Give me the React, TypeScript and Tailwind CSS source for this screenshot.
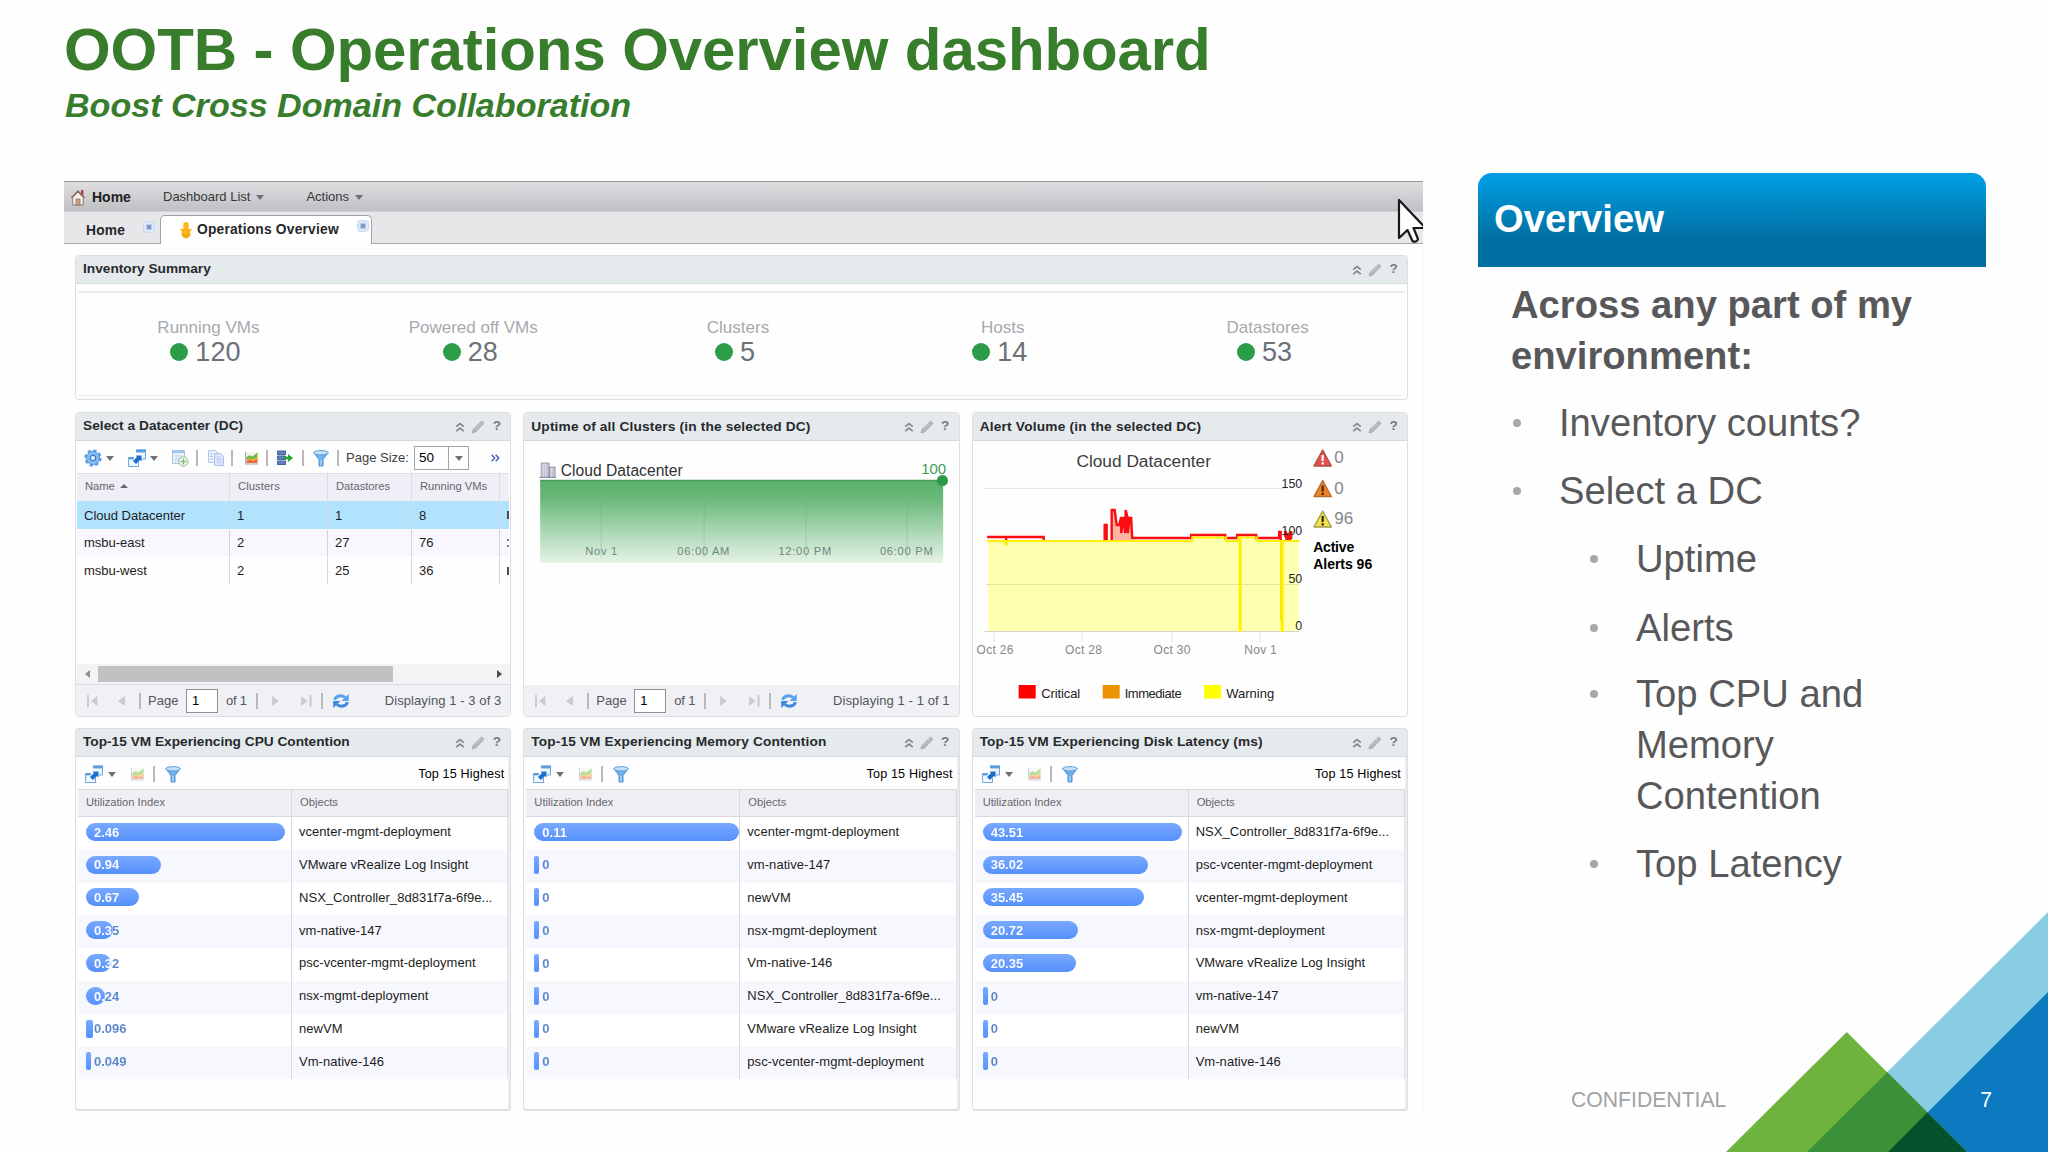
import type { ReactNode } from "react";

type Metric = { value: string; width: number; name: string };

const inventory = [
  { label: "Running VMs", value: 120 },
  { label: "Powered off VMs", value: 28 },
  { label: "Clusters", value: 5 },
  { label: "Hosts", value: 14 },
  { label: "Datastores", value: 53 },
];

const datacenters = [
  { name: "Cloud Datacenter", clusters: 1, datastores: 1, vms: 8 },
  { name: "msbu-east", clusters: 2, datastores: 27, vms: 76 },
  { name: "msbu-west", clusters: 2, datastores: 25, vms: 36 },
];

const cpu: Metric[] = [
  { value: "2.46", width: 199, name: "vcenter-mgmt-deployment" },
  { value: "0.94", width: 75, name: "VMware vRealize Log Insight" },
  { value: "0.67", width: 53, name: "NSX_Controller_8d831f7a-6f9e..." },
  { value: "0.35", width: 27, name: "vm-native-147" },
  { value: "0.32", width: 25, name: "psc-vcenter-mgmt-deployment" },
  { value: "0.24", width: 19, name: "nsx-mgmt-deployment" },
  { value: "0.096", width: 7, name: "newVM" },
  { value: "0.049", width: 5, name: "Vm-native-146" },
];

const memory: Metric[] = [
  { value: "0.11", width: 206, name: "vcenter-mgmt-deployment" },
  { value: "0", width: 5, name: "vm-native-147" },
  { value: "0", width: 5, name: "newVM" },
  { value: "0", width: 5, name: "nsx-mgmt-deployment" },
  { value: "0", width: 5, name: "Vm-native-146" },
  { value: "0", width: 5, name: "NSX_Controller_8d831f7a-6f9e..." },
  { value: "0", width: 5, name: "VMware vRealize Log Insight" },
  { value: "0", width: 5, name: "psc-vcenter-mgmt-deployment" },
];

const disk: Metric[] = [
  { value: "43.51", width: 199, name: "NSX_Controller_8d831f7a-6f9e..." },
  { value: "36.02", width: 165, name: "psc-vcenter-mgmt-deployment" },
  { value: "35.45", width: 161, name: "vcenter-mgmt-deployment" },
  { value: "20.72", width: 95, name: "nsx-mgmt-deployment" },
  { value: "20.35", width: 93, name: "VMware vRealize Log Insight" },
  { value: "0", width: 5, name: "vm-native-147" },
  { value: "0", width: 5, name: "newVM" },
  { value: "0", width: 5, name: "Vm-native-146" },
];

function Caret({ className = "" }: { className?: string }) {
  return (
    <svg viewBox="0 0 8 5" className={`h-[5px] w-2 shrink-0 ${className}`}>
      <path d="M0 0h8L4 5z" fill="#6f6f74" />
    </svg>
  );
}

function Sep({ className = "" }: { className?: string }) {
  return <div className={`h-4 w-[2px] shrink-0 bg-[#b9b9bd] ${className}`} />;
}

function HomeIcon() {
  return (
    <svg viewBox="0 0 14 17" className="ml-[7px] h-[17px] w-[14px] shrink-0">
      <path d="M10 1h2.4v5H10z" fill="#a9473f" />
      <path d="M1.8 8.5 7 3l5.2 5.500V16H1.800z" fill="#f6f1ec" stroke="#8d7a6e" />
      <path d="M.4 9 7 2l6.600 7" fill="none" stroke="#8a6a5c" strokeWidth="1.500" />
      <path d="M5 10h4v6H5z" fill="#c9a58c" stroke="#85685a" strokeWidth=".8" />
    </svg>
  );
}

function TabClose({ className = "" }: { className?: string }) {
  return (
    <svg viewBox="0 0 12 12" className={`h-3 w-3 ${className}`}>
      <rect x=".5" y=".5" width="11" height="11" rx="3" fill="#dfe8f8" stroke="#c8d6f0" />
      <path d="M3.500 3.500h5v5h-5z" fill="#8ea6d6" />
      <path d="m4 4 4 4M8 4 4 8" stroke="#6c87c2" strokeWidth=".8" />
    </svg>
  );
}

function GearIcon({ className = "" }: { className?: string }) {
  return (
    <svg viewBox="0 0 18 18" className={`h-[18px] w-[18px] shrink-0 ${className}`}>
      <circle cx="9" cy="9" r="7.500" fill="none" stroke="#5b9be0" strokeWidth="2.200" strokeDasharray="3.460 2.430" />
      <circle cx="9" cy="9" r="6.500" fill="#86bbf2" stroke="#5296de" />
      <circle cx="9" cy="9" r="2.700" fill="#eef6ff" stroke="#3877c0" strokeWidth="1.200" />
    </svg>
  );
}

function PopoutIcon({ className = "" }: { className?: string }) {
  return (
    <svg viewBox="0 0 18 18" className={`h-[18px] w-[18px] shrink-0 ${className}`}>
      <path d="M8.500 1h9v9h-4" fill="#eaf4fe" stroke="#6aa5dc" />
      <path d="M8 .6h9.900v2.800H8z" fill="#5c9fdf" />
      <path d="M6 8.500H.6v9h9.900V13" fill="#f4f9ff" stroke="#6aa5dc" />
      <path d="M.6 8h5v2.400h-5z" fill="#5c9fdf" />
      <path d="m5 12 4-4-1.500-1.500h6v6L12 11l-4 4z" fill="#1b6fd0" />
    </svg>
  );
}

function ChartIcon({ className = "" }: { className?: string }) {
  return (
    <svg viewBox="0 0 14 14" className={`h-[14px] w-[13px] shrink-0 ${className}`}>
      <path d="M1 .5h12.500v12.500H1z" fill="#f3f3e4" />
      <path d="M1.500 9.500V6L5 4l3 1.500L13.500 1v6L9 9 5.500 8z" fill="#6cb944" />
      <path d="M1.500 10V8.500l4-1L9 8.500l4.500-3v3L9 11z" fill="#f3b73c" />
      <path d="M1.500 12.500V10l4-1.500L9 10.500l4.500-3v5z" fill="#ee6c3a" />
      <path d="M.6 0v13.400H14" fill="none" stroke="#9aa9bd" strokeWidth="1.100" />
    </svg>
  );
}

function FunnelIcon({ className = "" }: { className?: string }) {
  return (
    <svg viewBox="0 0 16 17" className={`h-[17px] w-4 shrink-0 ${className}`}>
      <path d="M.8 2.500 6 9.500V16h4V9.500l5.200-7z" fill="#72b1ea" stroke="#4a90d6" />
      <ellipse cx="8" cy="2.800" rx="7.300" ry="2.200" fill="#c5e0f8" stroke="#5b9edc" />
      <path d="M8 10v5.500" stroke="#b8dafa" strokeWidth="1.200" />
    </svg>
  );
}

function RefreshIcon({ className = "" }: { className?: string }) {
  return (
    <svg viewBox="0 0 18 16" className={`h-4 w-[18px] shrink-0 ${className}`}>
      <path d="M2.500 6.800C4 2.500 10 1.500 13.300 4.800" fill="none" stroke="#5ba3ee" strokeWidth="3" />
      <path d="M16.800 1v7H9.500z" fill="#5ba3ee" />
      <path d="M15.500 9.200C14 13.500 8 14.500 4.700 11.200" fill="none" stroke="#3a88e2" strokeWidth="3" />
      <path d="M1.200 15V8h7.300z" fill="#3a88e2" />
    </svg>
  );
}

function PanelTools() {
  return (
    <div className="ml-auto flex items-center">
      <svg viewBox="0 0 10 10" className="h-[10px] w-[10px]">
        <path d="m1.200 4.700 3.800-3 3.800 3M1.200 9.200l3.800-3 3.800 3" fill="none" stroke="#83858a" strokeWidth="1.700" />
      </svg>
      <svg viewBox="0 0 14 14" className="ml-[6px] h-[14px] w-[14px]">
        <path d="m1 13 1-3.600L10.700 1 13 3.300 4.600 12z" fill="#b4b5b8" stroke="#a3a5a9" strokeWidth=".7" />
        <path d="m3.500 9.500 7-6.700" stroke="#d3d4d7" strokeWidth=".8" />
      </svg>
      <span className="ml-[7px] mr-[9px] w-[9px] text-center text-[13.500px] font-bold text-[#77797e]">?</span>
    </div>
  );
}

type PanelProps = { title: string; titleClass?: string; className?: string; children: ReactNode };

function Panel({ title, titleClass = "", className = "", children }: PanelProps) {
  return (
    <section className={`flex min-w-0 flex-col overflow-hidden rounded-[4px] border border-[#dcdee2] ${className}`}>
      <div className="flex h-[28px] shrink-0 items-center border-b border-[#d6dade] bg-[#e5eaed] pl-[7px]">
        <h3 className={`text-[13.700px] font-bold whitespace-nowrap text-[#27292c] ${titleClass}`}>{title}</h3>
        <PanelTools />
      </div>
      {children}
    </section>
  );
}

function Pager({ total }: { total: number }) {
  return (
    <div className="flex h-[31px] shrink-0 items-center bg-[#eff1f4] text-[13px] whitespace-nowrap text-[#55565a]">
      <svg viewBox="0 0 12 12" className="ml-[11px] h-3 w-3 shrink-0">
        <path d="M0 0h2v12H0zM10.500 1v10L4 6z" fill="#c9cbcf" />
      </svg>
      <svg viewBox="0 0 8 12" className="ml-[19px] h-3 w-2 shrink-0">
        <path d="M7 1v10L0 6z" fill="#c9cbcf" />
      </svg>
      <Sep className="ml-[13px]" />
      <span className="ml-[7px] w-[38px] shrink-0">Page</span>
      <span className="flex h-[24px] w-[32px] shrink-0 items-center border border-[#8f9094] bg-white pt-px pl-[5px] text-black">1</span>
      <span className="ml-[8px] w-[30px] shrink-0 tracking-[-0.2px]">of 1</span>
      <Sep />
      <svg viewBox="0 0 8 12" className="ml-[14px] h-3 w-2 shrink-0">
        <path d="M0 1v10l7-5z" fill="#c9cbcf" />
      </svg>
      <svg viewBox="0 0 12 12" className="ml-[20px] h-3 w-3 shrink-0">
        <path d="M9.500 0h2v12h-2zM1 1v10l6.500-5z" fill="#c9cbcf" />
      </svg>
      <Sep className="ml-[9px]" />
      <RefreshIcon className="ml-[9px]" />
      <span className="mr-[9px] ml-auto tracking-[0.080px]">
        Displaying 1 - {total} of {total}
      </span>
    </div>
  );
}

function DatacenterPanel() {
  return (
    <Panel title="Select a Datacenter (DC)" titleClass="tracking-[0.050px]">
      <div className="flex h-[32px] shrink-0 items-center pt-[2px]">
        <GearIcon className="ml-[8px]" />
        <Caret className="ml-[4px]" />
        <PopoutIcon className="ml-[14px]" />
        <Caret className="ml-[4px]" />
        <svg viewBox="0 0 17 17" className="ml-[14px] h-[17px] w-[17px] shrink-0">
          <path d="M.5.5h12v13H.500z" fill="#e8f0fa" stroke="#a9c3e2" />
          <path d="M.5.500h12v2.500H.500z" fill="#a5c6ec" />
          <path d="M3 6h7M3 8.500h5M3 11h4" stroke="#bccfe6" />
          <circle cx="11.500" cy="11.500" r="4.700" fill="#e2f1de" stroke="#9ebf9a" />
          <path d="M11.500 8.800v5.400M8.800 11.500h5.400" stroke="#7fae7c" />
        </svg>
        <Sep className="ml-[7px]" />
        <svg viewBox="0 0 16 16" className="ml-[10px] h-4 w-4 shrink-0">
          <path d="M.5.5h7l2 2v10h-9z" fill="#edf2fd" stroke="#b3c6f0" />
          <path d="M6.500 3.500h6l3 3v9h-9z" fill="#dfe8fb" stroke="#a9bfee" />
          <path d="M2 4h3M2 6.500h3M2 9h3M8.500 7h4M8.500 9.500h5M8.500 12h5" stroke="#b3c6f0" />
        </svg>
        <Sep className="ml-[7px]" />
        <ChartIcon className="ml-[12px]" />
        <Sep className="ml-[8px]" />
        <svg viewBox="0 0 16 16" className="ml-[9px] h-4 w-4 shrink-0">
          <path d="M.5 1h8v3.500h-8zM.5 6h8v3.500h-8zM.5 11h8v3.500h-8z" fill="#5f83c4" stroke="#41609f" />
          <path d="M6 6.700h5V4l5 4-5 4V9.300H6z" fill="#23a52f" />
        </svg>
        <Sep className="ml-[9px]" />
        <FunnelIcon className="ml-[9px]" />
        <Sep className="ml-[8px]" />
        <span className="ml-[7px] w-[68px] shrink-0 text-[13px] whitespace-nowrap text-[#3c3d40]">Page Size:</span>
        <div className="flex h-[24px] w-[55px] shrink-0 items-stretch border border-[#a3a4a8] text-[13.500px] text-black">
          <span className="flex flex-1 items-center pl-1">50</span>
          <span className="flex w-[20px] items-center justify-center border-l border-[#a3a4a8]">
            <Caret />
          </span>
        </div>
        <svg viewBox="0 0 9 8" className="mr-[10px] ml-auto h-2 w-[9px] shrink-0">
          <path d="m.7.700 3 3.300-3 3.300M4.700.700l3 3.300-3 3.300" fill="none" stroke="#4a62b8" strokeWidth="1.500" />
        </svg>
      </div>
      <div className="mx-px grid h-[28px] shrink-0 grid-cols-[153px_98px_84px_88px_1fr] items-stretch border-t border-[#dfdde6] bg-[#f0eef6] text-[11.200px] whitespace-nowrap text-[#66676b]">
        <span className="flex items-center gap-[5px] border-r border-[#dddbe4] pb-[3px] pl-[8px]">
          Name
          <svg viewBox="0 0 8 4" className="h-1 w-2">
            <path d="M0 4h8L4 0z" fill="#66676b" />
          </svg>
        </span>
        <span className="flex items-center border-r border-[#dddbe4] pb-[3px] pl-[8px] tracking-[0.1px]">Clusters</span>
        <span className="flex items-center border-r border-[#dddbe4] pb-[3px] pl-[8px]">Datastores</span>
        <span className="flex items-center border-r border-[#dddbe4] pb-[3px] pl-[8px]">Running VMs</span>
      </div>
      {datacenters.map((dc, i) => (
        <div
          key={dc.name}
          className={`mx-px grid h-[27.800px] shrink-0 grid-cols-[153px_98px_84px_88px_1fr] pt-px text-[13px] whitespace-nowrap text-[#1c1d20] ${
            i === 0 ? "bg-[#b1e2fe]" : i === 1 ? "bg-[#f8f7fe]" : ""
          }`}
        >
          <span className="flex items-center border-r border-[#d3d5dc] pl-[7px]">{dc.name}</span>
          <span className="flex items-center border-r border-[#d3d5dc] pl-[7px]">{dc.clusters}</span>
          <span className="flex items-center border-r border-[#d3d5dc] pl-[7px]">{dc.datastores}</span>
          <span className="flex items-center border-r border-[#d3d5dc] pl-[7px]">{dc.vms}</span>
          <span className="flex items-center justify-end">
            {i === 1 ? (
              <span className="flex flex-col gap-1">
                <i className="h-[2px] w-[2px] bg-[#77787c]" />
                <i className="h-[2px] w-[2px] bg-[#77787c]" />
              </span>
            ) : (
              <i className="h-2 w-[2px] bg-[#4b4c50]" />
            )}
          </span>
        </div>
      ))}
      <div className="mt-auto flex h-[21px] shrink-0 items-center border-b border-[#dcdce0] bg-[#f3f2f4]">
        <svg viewBox="0 0 5 8" className="ml-[9px] h-2 w-[5px]">
          <path d="M5 0v8L0 4z" fill="#8c8d91" />
        </svg>
        <div className="ml-[8px] h-[16px] w-[295px] bg-[#c1c0c3]" />
        <svg viewBox="0 0 5 8" className="mr-[8px] ml-auto h-2 w-[5px]">
          <path d="M0 0v8l5-4z" fill="#4d4e52" />
        </svg>
      </div>
      <Pager total={3} />
    </Panel>
  );
}

function UptimePanel() {
  return (
    <Panel title="Uptime of all Clusters (in the selected DC)" titleClass="pt-px tracking-[0.160px]">
      <svg viewBox="524 441 434 244" className="min-h-0 w-full flex-1">
        <defs>
          <linearGradient id="uptime" x1="0" y1="0" x2="0" y2="1">
            <stop offset="0" stopColor="#58b16a" />
            <stop offset=".2" stopColor="#68b878" />
            <stop offset="1" stopColor="#e6f3e8" />
          </linearGradient>
        </defs>
        <path d="M541 463h8v14h-8zM549 467h6v10h-6z" fill="#c3c2d2" stroke="#8f8fa3" strokeWidth=".8" />
        <path d="M543 464v13M545.500 464v13M551.500 468v9" stroke="#e6e6ee" strokeWidth=".8" />
        <path d="M539 477.500h17" stroke="#8f8fa3" />
        <text x="560.500" y="476" fontSize="15.600" fill="#2f3033" textLength="122">Cloud Datacenter</text>
        <text x="946" y="473.500" fontSize="15" textAnchor="end" fill="#3f9f53">100</text>
        <path d="M540 480.500h403V563H540z" fill="url(#uptime)" />
        <path d="M540 480.500h403" stroke="#4c9b5c" strokeWidth="1.500" />
        <path d="M601 500v58M704 500v58M806 500v58M907 500v58" stroke="#6f9f7b" strokeOpacity=".3" />
        <circle cx="942.300" cy="480.500" r="5.500" fill="#2a9a45" />
        <g fontSize="11.200" fill="#71877a" textAnchor="middle" letterSpacing=".7">
          <text x="601.500" y="555">Nov 1</text>
          <text x="703.500" y="555">06:00 AM</text>
          <text x="805" y="555">12:00 PM</text>
          <text x="906.500" y="555">06:00 PM</text>
        </g>
      </svg>
      <Pager total={1} />
    </Panel>
  );
}

function Warn({ y, fill, stroke, mark }: { y: number; fill: string; stroke: string; mark: string }) {
  return (
    <g>
      <path d={`M1322.500 ${y} l8.700 16 h-17.400z`} fill={fill} stroke={stroke} strokeWidth="1.400" strokeLinejoin="round" />
      <path d={`M1322.500 ${y + 5} v6`} stroke={mark} strokeWidth="2.200" />
      <path d={`M1322.500 ${y + 12.300} v2.200`} stroke={mark} strokeWidth="2.200" />
    </g>
  );
}

function AlertPanel() {
  return (
    <Panel title="Alert Volume (in the selected DC)" titleClass="pt-px tracking-[0.2px]">
      <svg viewBox="973 441 434 275" className="min-h-0 w-full flex-1">
        <text x="1143.500" y="467" fontSize="17.300" textAnchor="middle" fill="#3c3d40">Cloud Datacenter</text>
        <path d="M984 488.500h302" stroke="#e4e9ee" />
        <path d="M988 541h310.500v91H988z" fill="#ffffb0" />
        <path d="M1192 541v-4h34v4M1238 541v-4h19v4" fill="#ffffb0" />
        <path d="M986 584.500h313" stroke="#e4e69f" />
        <path d="M984 631.500h315" stroke="#d3d6c6" />
        <path d="M994 632v10M1082 632v10M1172 632v10M1260 632v10" stroke="#dfe3ea" />
        <path d="M1111.500 540v-29h3l2 13 3 1 2-8 3 0 1-7 2 7 4 0v23z" fill="#fcb4a4" />
        <path
          d="M987 537h56.500v3M1006 537v4M1104.500 540v-15h2v15M1111.500 540v-30h3l2 15h2.500l2-8v16l2-16 2 16 .500-23 2 8v15l2-15h1.500l1 20h59v-3h34v3h12v-3h19v3h23v-6l1.500 0v8M1285 537v-6l3 8v-6l3 6v-8"
          fill="none"
          stroke="#fb0d12"
          strokeWidth="2.400"
        />
        <path d="M1285 533h6v7h-6z" fill="#fb0d12" />
        <path
          d="M987 541h18.500v3.500h1V541H1192v-3.500h34v3.500h12v-3.500h19v3.500h42.500"
          fill="none"
          stroke="#fff000"
          strokeWidth="2"
        />
        <path d="M1240 539v93M1282 541v91" stroke="#fff000" strokeWidth="3" />
        <path d="M1280.500 541v80" stroke="#ffe000" />
        <g fontSize="12.400" fill="#222326" textAnchor="end">
          <text x="1302" y="487.500">150</text>
          <text x="1302" y="535">100</text>
          <text x="1302" y="582.500">50</text>
          <text x="1302" y="630">0</text>
        </g>
        <g fontSize="12" fill="#86878b" textAnchor="middle" letterSpacing=".3">
          <text x="995" y="654">Oct 26</text>
          <text x="1083.500" y="654">Oct 28</text>
          <text x="1172" y="654">Oct 30</text>
          <text x="1260.500" y="654">Nov 1</text>
        </g>
        <path d="M1018.500 685h17v13.500h-17z" fill="#fe0000" />
        <path d="M1102.500 685h17v13.500h-17z" fill="#e99400" />
        <path d="M1204 685h17v13.500h-17z" fill="#ffff00" />
        <g fontSize="13" fill="#1f2023">
          <text x="1041" y="697.500" textLength="39">Critical</text>
          <text x="1124.500" y="697.500" textLength="57">Immediate</text>
          <text x="1226" y="697.500" textLength="48">Warning</text>
        </g>
        <Warn y={450} fill="#e2504e" stroke="#b8484a" mark="#ffffff" />
        <Warn y={480.500} fill="#ef8226" stroke="#b5702f" mark="#3c2a12" />
        <Warn y={511} fill="#f3e04a" stroke="#a59d50" mark="#2b2a1c" />
        <g fontSize="17" fill="#85868a">
          <text x="1334" y="463">0</text>
          <text x="1334" y="493.500">0</text>
          <text x="1334" y="524">96</text>
        </g>
        <g fontSize="14" fontWeight="bold" fill="#000000">
          <text x="1313" y="552" textLength="41">Active</text>
          <text x="1313" y="569" textLength="59">Alerts 96</text>
        </g>
      </svg>
    </Panel>
  );
}

function MetricBar({ value, width }: { value: string; width: number }) {
  // label starts 8px into the bar and turns blue where the bar ends
  const edge = Math.max(width - 8, 0);
  return (
    <div
      className={`flex h-[18px] items-center bg-linear-to-b from-[#79a9ff] to-[#5590fb] ${
        width > 10 ? "rounded-full" : "rounded-[2px]"
      }`}
      style={{ width }}
    >
      <span
        className="ml-[8px] bg-clip-text pt-px text-[13px] font-bold text-transparent"
        style={{ backgroundImage: `linear-gradient(to right, #ffffff ${edge}px, #5c86cb ${edge}px)` }}
      >
        {value}
      </span>
    </div>
  );
}

function TopPanel({ title, titleClass, rows }: { title: string; titleClass?: string; rows: Metric[] }) {
  return (
    <Panel title={title} titleClass={titleClass} className="border-b-2 shadow-[inset_-2px_0_0_#ececef]">
      <div className="flex h-[32px] shrink-0 items-center pt-[2px]">
        <PopoutIcon className="ml-[9px]" />
        <Caret className="ml-[5px]" />
        <ChartIcon className="ml-[15px] opacity-50" />
        <Sep className="ml-[9px]" />
        <FunnelIcon className="ml-[10px]" />
        <span className="mr-[6px] ml-auto text-[12.600px] tracking-[0.150px] text-black">Top 15 Highest</span>
      </div>
      <div className="mx-[2px] grid h-[28px] shrink-0 grid-cols-[214px_1fr] border-t border-b border-[#d9d8df] bg-[#efeef5] text-[11.200px] text-[#66676b]">
        <span className="flex items-center border-r border-[#d9d8df] pb-px pl-[8px]">Utilization Index</span>
        <span className="flex items-center border-r border-[#d9d8df] pb-px pl-[8px]">Objects</span>
      </div>
      {rows.map((row, i) => (
        <div
          key={row.name}
          className={`mx-[2px] grid h-[32.800px] shrink-0 grid-cols-[214px_1fr] ${i % 2 ? "bg-[#f7f7fe]" : "bg-white"}`}
        >
          <div className="flex items-center border-r border-[#d9d9e2] pb-[3px] pl-[8px]">
            <MetricBar value={row.value} width={row.width} />
          </div>
          <div className="flex items-center border-r border-[#e3e3ea] pb-[3px] pl-[7px] text-[13px] tracking-[0.040px] whitespace-nowrap text-[#1c1d20]">
            {row.name}
          </div>
        </div>
      ))}
    </Panel>
  );
}

function Dashboard() {
  return (
    <div className="relative flex h-[931px] w-[1359px] flex-col overflow-hidden">
      <div className="flex h-[30px] shrink-0 items-center border-t border-[#98979a] bg-linear-to-b from-[#dfdee1] to-[#c0bfc3] pt-px text-[13px] text-[#37383b]">
        <HomeIcon />
        <span className="ml-[7px] w-[71px] text-[14px] font-bold text-[#1d1e20]">Home</span>
        <span>Dashboard List</span>
        <Caret className="ml-[6px]" />
        <span className="ml-[42px]">Actions</span>
        <Caret className="ml-[6px]" />
      </div>
      <div className="flex h-[33px] shrink-0 items-end border-t border-[#cfced2] bg-[#e7e7e9] text-[13.800px] font-bold text-[#27282b]">
        <div className="flex h-full w-[96px] border-b border-[#a9a8ac]">
          <span className="mt-[9px] ml-[22px] w-[57px] leading-[20px] tracking-[0.2px]">Home</span>
          <TabClose className="mt-[9px]" />
        </div>
        <div className="flex h-[29px] w-[212px] rounded-t-[5px] border border-b-0 border-[#a1a0a5] bg-white">
          <svg viewBox="0 0 12 17" className="mt-[6px] ml-[19px] h-[17px] w-3">
            <path d="M3.300 1.800C3.300-.3 8.700-.3 8.700 1.800V7H12l-2 3c2 3-1 6.500-4 6.500S0 13 2 10L0 7h3.300z" fill="#fbb41c" />
            <path d="M3 12.500c2 2 4 2 6 0" fill="none" stroke="#e4960a" />
          </svg>
          <span className="mt-[4px] ml-[5px] w-[160px] leading-[20px] tracking-[0.2px] whitespace-nowrap">Operations Overview</span>
          <TabClose className="mt-[4px]" />
        </div>
        <div className="h-full flex-1 border-b border-[#a9a8ac]" />
      </div>
      <div className="flex flex-1 flex-col border-r border-[#f3f3f6] pt-[11px] pr-[14px] pl-[11px]">
        <Panel title="Inventory Summary" className="h-[145px]">
          <div className="mx-[2px] mt-[7px] mb-[3px] grid flex-1 grid-cols-[repeat(5,264.800px)] border-t-2 border-b border-[#e9e9ee]">
            {inventory.map((item) => (
              <div key={item.label} className="flex flex-col items-center pt-[24px] pr-[4px]">
                <span className="text-[17px] leading-[22px] text-[#a7a9af]">{item.label}</span>
                <span className="mr-[6px] flex items-center gap-[7px] text-[27px] leading-[26px] text-[#6c7078]">
                  <i className="h-[18px] w-[18px] rounded-full bg-[#2b9c48]" />
                  {item.value}
                </span>
              </div>
            ))}
          </div>
        </Panel>
        <div className="mt-[12px] grid h-[305px] grid-cols-3 gap-3">
          <DatacenterPanel />
          <UptimePanel />
          <AlertPanel />
        </div>
        <div className="mt-[11px] grid h-[383px] grid-cols-3 gap-3">
          <TopPanel title="Top-15 VM Experiencing CPU Contention" rows={cpu} />
          <TopPanel title="Top-15 VM Experiencing Memory Contention" titleClass="tracking-[0.120px]" rows={memory} />
          <TopPanel title="Top-15 VM Experiencing Disk Latency (ms)" titleClass="tracking-[0.1px]" rows={disk} />
        </div>
      </div>
      <svg viewBox="0 0 30 46" className="absolute top-[17px] left-[1333px] h-[46px] w-[30px]">
        <path
          d="M2 2v38l8.500-8 5 11c2 1.500 5 .500 5.500-2l-4.500-11h12z"
          fill="#ffffff"
          stroke="#17171a"
          strokeWidth="2.200"
          strokeLinejoin="round"
        />
      </svg>
    </div>
  );
}

function Bullet({ sub, className = "mt-[17.300px]", children }: { sub?: boolean; className?: string; children: ReactNode }) {
  return (
    <li className={`flex ${sub ? "pl-[77px]" : ""} ${className}`}>
      <i className={`mt-[22px] ml-[2px] h-2 w-2 shrink-0 rounded-full bg-[#a8a8ab] ${sub ? "mr-[38px]" : "mr-[38px]"}`} />
      <span>{children}</span>
    </li>
  );
}

export default function App() {
  return (
    <div className="relative flex h-[1152px] w-[2048px] flex-col overflow-hidden bg-[#fefefe] font-['Liberation_Sans',Arial,sans-serif]">
      <svg viewBox="0 0 330 240" className="absolute right-0 bottom-0 h-[240px] w-[330px]">
        <path d="M330 0v240H89z" fill="#88cde2" />
        <path d="M330 80v160H170z" fill="#0c79c0" />
        <path d="M128.800 120 249 240H8z" fill="#6fb33f" />
        <path d="M169.300 160.300 249 240H89z" fill="#3a9138" />
        <path d="M209.300 200.500 249 240h-79z" fill="#04532d" />
      </svg>
      <header className="h-[181px] shrink-0 pt-[20px] pl-[64px] font-bold text-[#377d2b]">
        <h1 className="text-[60px] leading-[60px] tracking-[-0.1px]">OOTB - Operations Overview dashboard</h1>
        <h2 className="mt-[5px] pl-px text-[34.100px] leading-[40px] italic">Boost Cross Domain Collaboration</h2>
      </header>
      <main className="flex pl-[64px]">
        <Dashboard />
        <aside className="-mt-[8px] ml-[55px] w-[508px]">
          <div className="flex h-[94px] items-center rounded-t-[14px] bg-linear-to-b from-[#009de3] from-5% to-[#0070a2] to-68% pb-[2px] pl-[16px]">
            <h2 className="text-[38.200px] leading-none font-bold text-white">Overview</h2>
          </div>
          <div className="pt-[12px] pl-[33px] text-[38.200px] leading-[51px] text-[#58585b]">
            <p className="w-[440px] font-bold">Across any part of my environment:</p>
            <ul>
              <Bullet className="mt-[15.700px]">Inventory counts?</Bullet>
              <Bullet>Select a DC</Bullet>
              <Bullet sub>Uptime</Bullet>
              <Bullet sub>Alerts</Bullet>
              <Bullet sub className="mt-[15.500px]">
                Top CPU and
                <br />
                Memory
                <br />
                Contention
              </Bullet>
              <Bullet sub>Top Latency</Bullet>
            </ul>
          </div>
        </aside>
      </main>
      <footer className="absolute right-[56px] bottom-[38px] flex w-[421px] justify-between text-[21.200px] leading-[28px]">
        <span className="text-[#a3a2a6]">CONFIDENTIAL</span>
        <span className="text-white">7</span>
      </footer>
    </div>
  );
}
